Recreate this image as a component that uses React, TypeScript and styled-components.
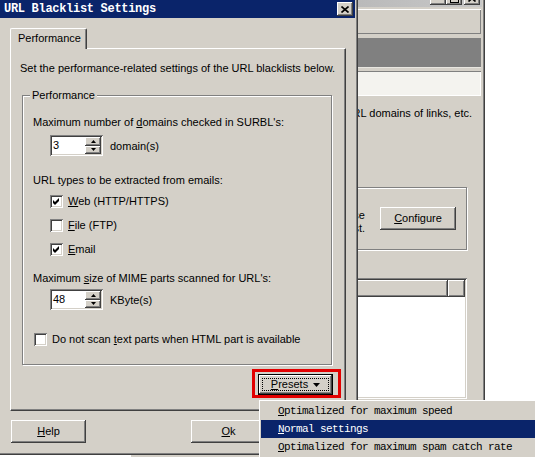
import React from 'react';
import styled, { createGlobalStyle, css } from 'styled-components';

const FACE = '#d4d0c8';
const SHADOW = '#808080';
const DARK = '#404040';
const NAVY = '#0a246a';

const GlobalStyle = createGlobalStyle`
  html, body {
    margin: 0;
    padding: 0;
    background: #fff;
  }
  * {
    box-sizing: border-box;
  }
`;

const raised = css`
  background: ${FACE};
  box-shadow: inset -1px -1px ${DARK}, inset 1px 1px #fff, inset -2px -2px ${SHADOW}, inset 2px 2px ${FACE};
`;

const sunken = css`
  box-shadow: inset 1px 1px ${SHADOW}, inset -1px -1px #fff, inset 2px 2px ${DARK}, inset -2px -2px ${FACE};
`;

const etched = css`
  border: 1px solid ${SHADOW};
  box-shadow: inset 1px 1px #fff, 1px 1px #fff;
`;

const Desktop = styled.div`
  position: relative;
  width: 535px;
  height: 457px;
  overflow: hidden;
  background: #fff;
  font-family: 'Liberation Sans', Arial, sans-serif;
  font-size: 11px;
  color: #000;
`;

/* ---------- window behind the dialog ---------- */

const BackWindow = styled.div`
  position: absolute;
  left: 130px;
  top: -14px;
  width: 355px;
  height: 480px;
  padding: 3px;
  display: flex;
  flex-direction: column;
  overflow: hidden;
  ${raised};
`;

const BackCaption = styled.div`
  height: 18px;
  flex: none;
  display: flex;
  align-items: center;
  justify-content: flex-end;
  padding-right: 2px;
  background: linear-gradient(to right, #a0a0a0, #c8c8c8);
`;

const CaptionButton = styled.div<{ $gap?: number }>`
  width: 16px;
  height: 14px;
  margin-left: ${p => p.$gap ?? 0}px;
  display: grid;
  place-items: center;
  ${raised};
`;

const BackBody = styled.div`
  display: flex;
  flex-direction: column;
  padding-right: 1px;
`;

const ToolStrip = styled.div`
  margin-top: 2px;
  height: 25px;
  background: ${FACE};
  box-shadow: inset 1px 1px #fff, inset -1px -1px ${SHADOW};
`;

const HeaderBand = styled.div`
  margin-top: 4px;
  height: 30px;
  background: ${SHADOW};
  border-bottom: 1px solid #e8e6e0;
`;

const LightField = styled.div`
  margin-top: 3px;
  height: 25px;
  background: #f4f3ef;
  box-shadow: inset 1px 1px ${SHADOW}, inset -1px -1px #fff;
`;

const BackText = styled.div`
  margin-top: 11px;
  padding-right: 9px;
  line-height: 13px;
  text-align: right;
  white-space: nowrap;
`;

const BackGroup = styled.div`
  margin: 67px 14px 0 0;
  height: 63px;
  display: flex;
  align-items: center;
  justify-content: flex-end;
  gap: 15px;
  padding-right: 10px;
  ${etched};
`;

const BackGroupText = styled.div`
  margin-top: 7px;
  line-height: 13px;
  text-align: right;
  white-space: nowrap;
`;

const ListView = styled.div`
  margin: 28px 14px 0 0;
  height: 121px;
  padding: 2px;
  background: #fff;
  ${sunken};
`;

const ListHeader = styled.div`
  display: flex;
  height: 17px;
`;

const HeaderCell = styled.div<{ $width?: number }>`
  ${raised};
  flex: ${p => (p.$width ? `0 0 ${p.$width}px` : '1')};
`;

/* ---------- dialog ---------- */

const Dialog = styled.div`
  position: absolute;
  left: -3px;
  top: -3px;
  width: 361px;
  height: 458px;
  padding: 3px;
  display: flex;
  flex-direction: column;
  ${raised};
`;

const TitleBar = styled.div`
  height: 18px;
  flex: none;
  display: flex;
  align-items: center;
  justify-content: space-between;
  padding: 0 2px 0 4px;
  background: ${NAVY};
`;

const TitleText = styled.span`
  color: #fff;
  font-family: 'Liberation Mono', 'Courier New', monospace;
  font-weight: bold;
  font-size: 12px;
  letter-spacing: -0.3px;
`;

const DialogBody = styled.div`
  display: flex;
  flex-direction: column;
  padding: 10px 9px 0 10px;
`;

const TabStrip = styled.div`
  display: flex;
  height: 20px;
`;

const Tab = styled.div`
  position: relative;
  z-index: 1;
  width: 77px;
  height: 21px;
  margin-bottom: -1px;
  padding: 3px 0 0 7px;
  line-height: 13px;
  background: ${FACE};
  border-top: 1px solid #fff;
  border-left: 1px solid #fff;
  border-right: 1px solid ${DARK};
  border-radius: 2px 2px 0 0;
  box-shadow: inset -1px 0 ${SHADOW};
`;

const TabPage = styled.div`
  width: 336px;
  height: 363px;
  display: flex;
  flex-direction: column;
  padding: 13px 12px 0 9px;
  border-top: 1px solid #fff;
  border-left: 1px solid #fff;
  border-right: 1px solid ${DARK};
  border-bottom: 1px solid ${DARK};
  box-shadow: inset -1px -1px ${SHADOW};
`;

const Line = styled.div<{ $top?: number }>`
  line-height: 13px;
  margin-top: ${p => p.$top ?? 0}px;
  white-space: nowrap;
`;

const GroupBox = styled.div`
  margin: 20px 0 0 2px;
  width: 310px;
  display: flex;
  flex-direction: column;
  padding: 0 10px 18px 10px;
  ${etched};
`;

const Legend = styled.span`
  align-self: flex-start;
  margin: -7px 0 0 -3px;
  padding: 0 2px;
  line-height: 13px;
  background: ${FACE};
`;

const SpinRow = styled.div<{ $top: number }>`
  display: flex;
  align-items: center;
  gap: 7px;
  margin-top: ${p => p.$top}px;
  padding-left: 17px;
`;

const SpinBox = styled.div`
  width: 53px;
  height: 21px;
  padding: 2px;
  display: flex;
  background: #fff;
  ${sunken};
`;

const SpinValue = styled.div`
  flex: 1;
  padding: 2px 0 0 1px;
  line-height: 13px;
`;

const SpinButtons = styled.div`
  width: 16px;
  display: flex;
  flex-direction: column;
`;

const SpinHalf = styled.div`
  flex: 1;
  display: grid;
  place-items: center;
  ${raised};
`;

const CheckRow = styled.div<{ $top: number; $indent?: number }>`
  display: flex;
  align-items: center;
  gap: 5px;
  height: 13px;
  margin-top: ${p => p.$top}px;
  padding-left: ${p => p.$indent ?? 17}px;
  line-height: 13px;
  white-space: nowrap;
`;

const CheckBox = styled.div`
  width: 13px;
  height: 13px;
  flex: none;
  background: #fff;
  ${sunken};
`;

const PresetsRow = styled.div`
  display: flex;
  justify-content: flex-end;
  margin-top: 9px;
`;

const Marked = styled.span`
  position: relative;
  display: inline-flex;

  &::after {
    content: '';
    position: absolute;
    left: -6px;
    top: -5px;
    right: -8px;
    bottom: -3px;
    border: 3px solid #e20000;
    pointer-events: none;
  }
`;

const PushButton = styled.div<{ $width?: number; $height?: number; $default?: boolean }>`
  position: relative;
  width: ${p => p.$width ?? 75}px;
  height: ${p => p.$height ?? 23}px;
  flex: none;
  display: flex;
  align-items: center;
  justify-content: center;
  gap: 5px;
  line-height: 13px;
  ${raised};
  ${p =>
    p.$default &&
    css`
      border: 1px solid #000;
      &::before {
        content: '';
        position: absolute;
        inset: 3px;
        border: 1px dotted #000;
      }
    `}
`;

const ButtonRow = styled.div`
  display: flex;
  justify-content: space-between;
  margin: 9px 80px 0 1px;
`;

/* ---------- popup menu ---------- */

const PopupMenu = styled.div`
  position: absolute;
  left: 259px;
  top: 400px;
  width: 280px;
  height: 62px;
  padding: 2px;
  display: flex;
  flex-direction: column;
  ${raised};
`;

const MenuItem = styled.div<{ $active?: boolean }>`
  height: 18px;
  line-height: 18px;
  padding-left: 17px;
  font-family: 'Liberation Mono', 'Courier New', monospace;
  font-size: 11px;
  letter-spacing: -0.6px;
  white-space: nowrap;
  background: ${p => (p.$active ? NAVY : 'transparent')};
  color: ${p => (p.$active ? '#fff' : '#000')};
`;

/* ---------- small drawings ---------- */

const Arrow = ({ up }: { up?: boolean }) => (
  <svg width="5" height="3" viewBox="0 0 5 3">
    <polygon points={up ? '2.5,0 5,3 0,3' : '0,0 5,0 2.5,3'} fill="#000" />
  </svg>
);

const Check = () => (
  <svg width="13" height="13" viewBox="0 0 13 13">
    <polygon points="3,5 5,7 9,3 9,6 5,10 3,8" fill="#000" />
  </svg>
);

const CloseGlyph = () => (
  <svg width="8" height="7" viewBox="0 0 8 7">
    <path d="M0.5 0.5 L7.5 6.5 M7.5 0.5 L0.5 6.5" stroke="#000" strokeWidth="1.6" />
  </svg>
);

const Box = ({ checked }: { checked?: boolean }) => <CheckBox>{checked && <Check />}</CheckBox>;

const Spin = ({ value }: { value: string }) => (
  <SpinBox>
    <SpinValue>{value}</SpinValue>
    <SpinButtons>
      <SpinHalf>
        <Arrow up />
      </SpinHalf>
      <SpinHalf>
        <Arrow />
      </SpinHalf>
    </SpinButtons>
  </SpinBox>
);

const App: React.FC = () => {
  return (
    <Desktop>
      <GlobalStyle />

      <BackWindow>
        <BackCaption>
          <CaptionButton>
            <svg width="6" height="2"><rect width="6" height="2" fill="#000" /></svg>
          </CaptionButton>
          <CaptionButton>
            <svg width="9" height="9"><rect x="0.5" y="0.5" width="8" height="8" fill="none" stroke="#000" /></svg>
          </CaptionButton>
          <CaptionButton $gap={2}>
            <CloseGlyph />
          </CaptionButton>
        </BackCaption>
        <BackBody>
          <ToolStrip />
          <HeaderBand />
          <LightField />
          <BackText>Checks the URL domains of links, etc.</BackText>
          <BackGroup>
            <BackGroupText>
              Set up the URL blacklists to use
              <br />
              and the score of each blacklist.
            </BackGroupText>
            <PushButton $width={76} $height={23}>
              <span>
                <u>C</u>onfigure
              </span>
            </PushButton>
          </BackGroup>
          <ListView>
            <ListHeader>
              <HeaderCell />
              <HeaderCell $width={17} />
            </ListHeader>
          </ListView>
        </BackBody>
      </BackWindow>

      <Dialog>
        <TitleBar>
          <TitleText>URL Blacklist Settings</TitleText>
          <CaptionButton>
            <CloseGlyph />
          </CaptionButton>
        </TitleBar>

        <DialogBody>
          <TabStrip>
            <Tab>Performance</Tab>
          </TabStrip>
          <TabPage>
            <Line>Set the performance-related settings of the URL blacklists below.</Line>

            <GroupBox>
              <Legend>Performance</Legend>
              <Line $top={14}>
                Maximum number of <u>d</u>omains checked in SURBL's:
              </Line>
              <SpinRow $top={6}>
                <Spin value="3" />
                <span>domain(s)</span>
              </SpinRow>

              <Line $top={18}>URL types to be extracted from emails:</Line>
              <CheckRow $top={8}>
                <Box checked />
                <span>
                  <u>W</u>eb (HTTP/HTTPS)
                </span>
              </CheckRow>
              <CheckRow $top={11}>
                <Box />
                <span>
                  <u>F</u>ile (FTP)
                </span>
              </CheckRow>
              <CheckRow $top={11}>
                <Box checked />
                <span>
                  <u>E</u>mail
                </span>
              </CheckRow>

              <Line $top={16}>
                Maximum <u>s</u>ize of MIME parts scanned for URL's:
              </Line>
              <SpinRow $top={4}>
                <Spin value="48" />
                <span>KByte(s)</span>
              </SpinRow>

              <CheckRow $top={23} $indent={1}>
                <Box />
                <span>
                  Do not scan <u>t</u>ext parts when HTML part is available
                </span>
              </CheckRow>
            </GroupBox>

            <PresetsRow>
              <Marked>
                <PushButton $width={75} $height={21} $default>
                  <span>
                    <u>P</u>resets
                  </span>
                  <svg width="7" height="4" viewBox="0 0 7 4">
                    <polygon points="0,0 7,0 3.5,4" fill="#000" />
                  </svg>
                </PushButton>
              </Marked>
            </PresetsRow>
          </TabPage>

          <ButtonRow>
            <PushButton>
              <span>
                <u>H</u>elp
              </span>
            </PushButton>
            <PushButton>
              <span>
                <u>O</u>k
              </span>
            </PushButton>
          </ButtonRow>
        </DialogBody>
      </Dialog>

      <PopupMenu>
        <MenuItem>
          <u>O</u>ptimalized for maximum speed
        </MenuItem>
        <MenuItem $active>
          <u>N</u>ormal settings
        </MenuItem>
        <MenuItem>
          <u>O</u>ptimalized for maximum spam catch rate
        </MenuItem>
      </PopupMenu>
    </Desktop>
  );
};

export default App;
